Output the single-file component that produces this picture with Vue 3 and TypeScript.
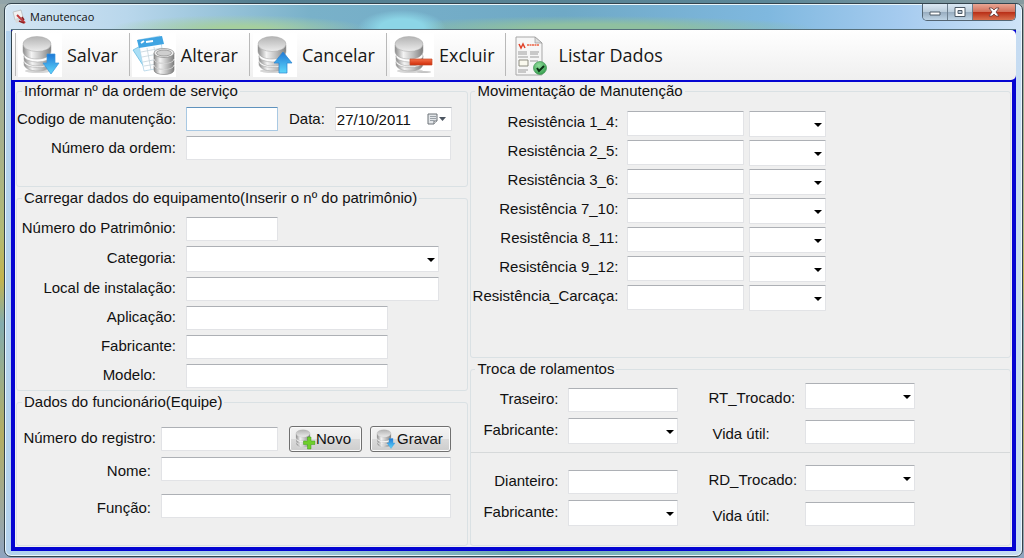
<script setup lang="ts">
import { reactive, ref } from 'vue'

interface Tool { label: string; icon: string }

const tools: Tool[] = [
  { label: 'Salvar', icon: 'salvar' },
  { label: 'Alterar', icon: 'alterar' },
  { label: 'Cancelar', icon: 'cancelar' },
  { label: 'Excluir', icon: 'excluir' },
  { label: 'Listar Dados', icon: 'listar' },
]

const resistances = reactive(
  ['1_4', '2_5', '3_6', '7_10', '8_11', '9_12'].map((n) => ({ id: `res-${n}`, label: `Resistência ${n}:`, value: '' }))
    .concat([{ id: 'res-carcaca', label: 'Resistência_Carcaça:', value: '' }]),
)

const bearings = reactive([
  { id: 'tr', name: 'Traseiro:', changed: 'RT_Trocado:', value: '', life: '' },
  { id: 'di', name: 'Dianteiro:', changed: 'RD_Trocado:', value: '', life: '' },
])

const date = ref('27/10/2011')
</script>

<template>
  <svg class="defs" aria-hidden="true">
    <defs>
      <linearGradient id="metal" x1="0" x2="1">
        <stop offset="0" stop-color="#8b8b8b" />
        <stop offset=".3" stop-color="#f4f4f4" />
        <stop offset=".65" stop-color="#bdbdbd" />
        <stop offset="1" stop-color="#7f7f7f" />
      </linearGradient>
      <linearGradient id="lid" x1="0" x2="0" y1="0" y2="1">
        <stop offset="0" stop-color="#b4b4b4" />
        <stop offset="1" stop-color="#ececec" />
      </linearGradient>
      <linearGradient id="blue" x1="0" x2="0" y1="0" y2="1">
        <stop offset="0" stop-color="#1f78d6" />
        <stop offset="1" stop-color="#5fd8fb" />
      </linearGradient>
      <linearGradient id="red" x1="0" x2="0" y1="0" y2="1">
        <stop offset="0" stop-color="#f4714a" />
        <stop offset="1" stop-color="#cf2a08" />
      </linearGradient>
      <radialGradient id="green" cx=".4" cy=".3" r=".8">
        <stop offset="0" stop-color="#8fdc9a" />
        <stop offset="1" stop-color="#2f9a48" />
      </radialGradient>
      <symbol id="stack" viewBox="0 0 44 44">
        <ellipse cx="20" cy="38" rx="13" ry="2" fill="#d6d6d6" />
        <g stroke="#9a9a9a" stroke-width=".5">
          <path d="M6 29v2c0 4 6 7 14 7s13-3 13-7v-2z" fill="url(#metal)" />
          <ellipse cx="19.500" cy="29" rx="13.500" ry="5.500" fill="#fdfdfd" />
          <path d="M6 23v3c0 4 6 7 14 7s13-3 13-7v-3z" fill="url(#metal)" />
          <ellipse cx="19.500" cy="23" rx="13.500" ry="6" fill="#fdfdfd" />
          <path d="M5 12v6c0 5 6 8 14 8s14-3 14-8v-6z" fill="url(#metal)" />
          <ellipse cx="19" cy="11" rx="14" ry="7.500" fill="url(#lid)" stroke="#a6a6a6" />
        </g>
      </symbol>
      <symbol id="salvar" viewBox="0 0 44 44">
        <use href="#stack" />
        <path d="M29 21h8v9h4l-8 11-8-11h4z" fill="url(#blue)" stroke="#3797dd" stroke-width=".7" />
      </symbol>
      <symbol id="cancelar" viewBox="0 0 44 44">
        <use href="#stack" />
        <path d="M26 40V30h-5l9-11 9 11h-5v10z" fill="url(#blue)" stroke="#2b83cf" stroke-width=".7" />
      </symbol>
      <symbol id="excluir" viewBox="0 0 44 44">
        <use href="#stack" />
        <ellipse cx="34" cy="39" rx="7" ry="1" fill="#c4c4c4" />
        <path d="M20 26h22v6H20z" fill="url(#red)" stroke="#c64a28" stroke-width=".7" />
      </symbol>
      <symbol id="novo" viewBox="0 0 44 44">
        <use href="#stack" />
        <path d="M28 18h7v8h8v7h-8v9h-7v-9h-8v-7h8z" fill="#6fce2c" stroke="#3f9c16" />
      </symbol>
      <symbol id="alterar" viewBox="0 0 44 44">
        <path d="M1 17l13-7 8 24-8 3z" fill="#a9dff6" stroke="#5bb5de" stroke-width=".7" />
        <path d="M6 7l22-4 5 31-21 4z" fill="#fdfeff" stroke="#a8cfe4" stroke-width=".7" />
        <path d="M5 7l25-4 2 8-25 4z" fill="#3fa4e2" />
        <path d="M9 10l3-2M14 9l7-1" stroke="#fff" stroke-width="2" />
        <path d="M9 19l21-4M10 24l21-4M11 29l20-4M12 33l19-3M15 15l4 22M22 14l4 22" stroke="#c5d4dc" stroke-width=".8" fill="none" />
        <g stroke="#777" stroke-width=".6">
          <path d="M22 33v4c0 6 20 6 20 0v-4z" fill="url(#metal)" />
          <path d="M22 27v5c0 6 20 6 20 0v-5z" fill="url(#metal)" />
          <path d="M22 20v6c0 6 20 6 20 0v-6z" fill="url(#metal)" />
          <path d="M22 32c0 6 20 6 20 0M22 26c0 6 20 6 20 0" fill="none" stroke="#fff" />
          <ellipse cx="32" cy="20" rx="10" ry="4.500" fill="#eee" />
          <ellipse cx="32" cy="20" rx="7.500" ry="3" fill="#cfcfcf" />
        </g>
      </symbol>
      <symbol id="listar" viewBox="0 0 44 44">
        <path d="M7 4h19l7 6v32H7z" fill="#f6f6f6" stroke="#a7a7a7" />
        <path d="M26 4v6h7z" fill="#dedede" stroke="#999" stroke-width=".7" />
        <path d="M10 11l2 4 2-4 2 4" fill="none" stroke="#e0432a" stroke-width="1.500" />
        <path d="M18 12h12" stroke="#ee8770" stroke-width="2" stroke-dasharray="2 .5" />
        <path d="M9 19h9M9 21h9M9 24h10M21 19h9M21 21h8M21 24h9M9 37h10M9 39h8M21 28h8" stroke="#9c9c9c" stroke-width="1" />
        <path d="M10 27h9v6h-9z" fill="#faf9ee" stroke="#8d8d82" />
        <circle cx="31" cy="35" r="6.500" fill="url(#green)" stroke="#2c8440" stroke-width=".6" />
        <path d="M28 35l2 3 5-5" fill="none" stroke="#0c3016" stroke-width="2" />
      </symbol>
    </defs>
  </svg>

  <main class="desktop">
    <div class="window">
      <header class="titlebar">
        <svg class="app-icon" viewBox="0 0 16 16" aria-hidden="true">
          <path d="M2 3l8-2 2 7-8 3z" fill="#f1f1f1" stroke="#b5b5b5" stroke-width=".7" />
          <path d="M4 10l3-1 2 4-4 1z" fill="#d9d9d9" />
          <path d="M6 6l8 8" stroke="#c0393c" stroke-width="2" />
          <path d="M8 12l5 2M11 8l2 3" stroke="#8d2020" stroke-width="1.500" />
        </svg>
        <h1>Manutencao</h1>
        <div class="controls">
          <button type="button" class="ctl min" aria-label="Minimizar">
            <svg viewBox="0 0 12 10"><path d="M1 5h10v3H1z" fill="#fff" stroke="#4d5a66" /></svg>
          </button>
          <button type="button" class="ctl max" aria-label="Maximizar">
            <svg viewBox="0 0 12 10"><path d="M1 .5h10v9H1z" fill="#fff" stroke="#4d5a66" /><path d="M4 3.500h4v3H4z" fill="#b4c3d2" stroke="#4d5a66" /></svg>
          </button>
          <button type="button" class="ctl close" aria-label="Fechar">
            <svg viewBox="0 0 12 10"><path d="M1 1h3l2 2 2-2h3L8 5l3 4H8L6 7 4 9H1l3-4z" fill="#fff" stroke="#5e3838" stroke-width=".8" /></svg>
          </button>
        </div>
      </header>

      <div class="client">
        <nav class="toolbar">
          <button v-for="t in tools" :key="t.icon" type="button" class="tool">
            <svg class="tool-icon" viewBox="0 0 44 44" aria-hidden="true"><use :href="`#${t.icon}`" /></svg>
            <span>{{ t.label }}</span>
          </button>
        </nav>

        <form class="body" @submit.prevent>
          <div class="column">
            <fieldset class="order">
              <legend>Informar nº da ordem de serviço</legend>
              <div class="row">
                <label for="codigo">Codigo de manutenção:</label>
                <input id="codigo" type="text" class="short focused" />
                <label for="data" class="date-label">Data:</label>
                <span class="date">
                  <input id="data" v-model="date" type="text" />
                  <button type="button" aria-label="Abrir calendário">
                    <svg viewBox="0 0 20 12"><path d="M1 1h9v7l-3 3H1z" fill="#e3e6e9" stroke="#6d7378" /><path d="M3 3.500h6M3 5.500h6M3 7.500h4" stroke="#9aa1a8" /><path d="M10 8H7v3" fill="#fff" stroke="#6d7378" /><path d="M12 4h7l-3.500 4z" fill="#4c5560" /></svg>
                  </button>
                </span>
              </div>
              <div class="row">
                <label for="ordem">Número da ordem:</label>
                <input id="ordem" type="text" class="full" />
              </div>
            </fieldset>

            <fieldset class="equipment">
              <legend>Carregar dados do equipamento(Inserir o nº do patrimônio)</legend>
              <div class="row">
                <label for="patrimonio">Número do Patrimônio:</label>
                <input id="patrimonio" type="text" class="short" />
              </div>
              <div class="row">
                <label for="categoria">Categoria:</label>
                <span class="combo wide"><select id="categoria"></select></span>
              </div>
              <div class="row">
                <label for="local">Local de instalação:</label>
                <input id="local" type="text" class="wide" />
              </div>
              <div class="row">
                <label for="aplicacao">Aplicação:</label>
                <input id="aplicacao" type="text" class="medium" />
              </div>
              <div class="row">
                <label for="fabricante">Fabricante:</label>
                <input id="fabricante" type="text" class="medium" />
              </div>
              <div class="row">
                <label for="modelo" class="inset">Modelo:</label>
                <input id="modelo" type="text" class="medium" />
              </div>
            </fieldset>

            <fieldset class="staff">
              <legend>Dados do funcionário(Equipe)</legend>
              <div class="row actions">
                <label for="registro">Número do registro:</label>
                <input id="registro" type="text" class="entry" />
                <button type="button" class="push novo"><svg viewBox="0 0 44 44" aria-hidden="true"><use href="#novo" /></svg>Novo</button>
                <button type="button" class="push gravar"><svg viewBox="0 0 44 44" aria-hidden="true"><use href="#salvar" /></svg>Gravar</button>
              </div>
              <div class="row person">
                <label for="nome">Nome:</label>
                <input id="nome" type="text" class="long" />
              </div>
              <div class="row person">
                <label for="funcao">Função:</label>
                <input id="funcao" type="text" class="long" />
              </div>
            </fieldset>
          </div>

          <div class="column side">
            <fieldset class="movement">
              <legend>Movimentação de Manutenção</legend>
              <div v-for="r in resistances" :key="r.id" class="row">
                <label :for="r.id">{{ r.label }}</label>
                <input :id="r.id" v-model="r.value" type="text" class="entry" />
                <span class="combo unit"><select :aria-label="`Unidade ${r.label}`"></select></span>
              </div>
            </fieldset>

            <fieldset class="bearings">
              <legend>Troca de rolamentos</legend>
              <div v-for="b in bearings" :key="b.id" class="bearing">
                <div class="part">
                  <div class="row">
                    <label :for="`${b.id}-nome`">{{ b.name }}</label>
                    <input :id="`${b.id}-nome`" v-model="b.value" type="text" class="slot" />
                  </div>
                  <div class="row">
                    <label :for="`${b.id}-fab`">Fabricante:</label>
                    <span class="combo slot"><select :id="`${b.id}-fab`"></select></span>
                  </div>
                </div>
                <div class="state">
                  <div class="row">
                    <label :for="`${b.id}-troca`">{{ b.changed }}</label>
                    <span class="combo slot"><select :id="`${b.id}-troca`"></select></span>
                  </div>
                  <div class="row">
                    <label :for="`${b.id}-vida`" class="life">Vida útil:</label>
                    <input :id="`${b.id}-vida`" v-model="b.life" type="text" class="slot" />
                  </div>
                </div>
              </div>
            </fieldset>
          </div>
        </form>
      </div>
    </div>
  </main>
</template>

<style>
body {
  margin: 0;
}
</style>

<style scoped>
* {
  box-sizing: border-box;
}
.defs {
  position: absolute;
  width: 0;
  height: 0;
}
.desktop {
  display: flex;
  min-height: 100vh;
  padding: 3px 1px 1px 4px;
  background:
    linear-gradient(90deg, #93a5aa, #547f91 25%, #5b8798 75%, #879ba0) top / 100% 4px no-repeat,
    linear-gradient(180deg, #9aa9ab 0, #a6b08c 25%, #b2ba74 42%, #c3b44e 50%, #83acae 58%, #b3ae62 78%, #8fa4c0 100%);
  font-family: "Liberation Sans", Arial, sans-serif;
  font-size: 15px;
  line-height: 18px;
  color: #111;
}
.window {
  flex: 1;
  display: flex;
  flex-direction: column;
  min-width: 0;
  padding: 0 6px 5px;
  border: 1px solid #33434d;
  border-radius: 7px;
  box-shadow: inset 0 0 0 1px #eaf6fb;
  background:
    radial-gradient(ellipse 44px 18px at 39% 24px, #8cd5e6 50%, transparent) no-repeat,
    radial-gradient(ellipse 130px 14px at 23% 25px, #a5cf9e 20%, transparent) no-repeat,
    radial-gradient(ellipse 220px 12px at 58% 24px, #8fc0a0 30%, transparent) no-repeat,
    linear-gradient(90deg, #d3e5f3 0, #b9d7ec 12%, #79b1c9 30%, #6fa9c6 55%, #7fb8df 75%, #a5cbef 88%, #cfe4f8 100%) top / 100% 27px no-repeat,
    linear-gradient(90deg, #b4d3ee 0, #a5cde2 28%, #72aab2 50%, #8bc0c8 72%, #bdd5f0 84%, #c6dcf2 100%);
}
.titlebar {
  display: flex;
  align-items: center;
  height: 25px;
}
.app-icon {
  width: 16px;
  height: 16px;
}
h1 {
  flex: 1;
  margin: 0 0 0 3px;
  font: 11px/18px "Open Sans", "Noto Sans", sans-serif;
}
.controls {
  display: flex;
  align-self: flex-start;
  border: 1px solid #536573;
  border-top: 0;
  border-radius: 0 0 5px 5px;
  overflow: hidden;
}
.ctl {
  display: grid;
  place-items: center;
  width: 25px;
  height: 16px;
  padding: 0;
  border: 0;
  border-right: 1px solid #6d7f8e;
  background: linear-gradient(#dce9f4, #bccddb 48%, #98adc0 52%, #bfd4e5);
}
.ctl svg {
  width: 12px;
  height: 10px;
}
.ctl.close {
  width: 42px;
  border-right: 0;
  background: linear-gradient(#e9a694, #d3705a 48%, #b92f17 52%, #d9704e);
}
.client {
  flex: 1;
  display: flex;
  flex-direction: column;
  border-top: 1px solid #56707c;
  background: #0505d2;
}
.toolbar {
  display: flex;
  height: 50px;
  padding: 3px 0 4px 3px;
  border-left: 1px solid #33434d;
  border-radius: 2px 5px 5px 0;
  background: linear-gradient(#fff, #f7f7f7 50%, #efefef);
}
.tool {
  display: flex;
  align-items: center;
  gap: 5px;
  padding: 0 11px 0 2px;
  border: 0;
  border-left: 1px solid #b9b9b9;
  background: none;
  font: 18px/26px "Open Sans", "Noto Sans", sans-serif;
  color: #161616;
  white-space: nowrap;
}
.tool:nth-child(n + 3) {
  padding-left: 3px;
}
.tool-icon {
  width: 44px;
  height: 44px;
  background: #fff;
}
.tool:last-child .tool-icon {
  background: none;
}
.body {
  flex: 1;
  display: grid;
  grid-template-columns: 452fr 540fr;
  gap: 2px;
  padding: 0 1px 1px;
  border: 4px solid #0505d2;
  border-top-width: 2px;
  background: #efefef;
}
.column {
  display: flex;
  flex-direction: column;
  gap: 2px;
  min-width: 0;
}
fieldset {
  min-width: 0;
  margin: 0;
  padding: 0;
  border: 1px solid #dae1e4;
  border-radius: 3px;
}
legend {
  margin-left: 5px;
  padding: 0 2px;
}
.side legend {
  margin-left: 4px;
}
.row {
  display: flex;
  align-items: center;
}
label {
  flex: none;
  width: 159px;
  margin-right: 10px;
  padding-bottom: 3px;
  text-align: right;
  white-space: nowrap;
}
input,
select {
  height: 24px;
  padding: 0 3px;
  border: 1px solid #e2e3e6;
  border-top-color: #adb0b5;
  border-radius: 1px;
  outline: 0;
  background: #fff;
  font: inherit;
  color: #111;
}
.focused {
  border-color: #a9c9e3;
  border-top-color: #5f92bd;
}
.combo {
  position: relative;
  display: flex;
}
.combo::after {
  content: "";
  position: absolute;
  right: 4px;
  top: 12px;
  border: 4px solid transparent;
  border-top-color: #000;
  border-bottom: 0;
  pointer-events: none;
}
select {
  width: 100%;
  height: 26px;
  appearance: none;
}
.short { width: 92px; }
.full { width: 265px; }
.wide { width: 253px; }
.medium { width: 202px; }
.entry { width: 117px; }
.long { width: 290px; }
.unit { width: 77px; }
.slot { width: 110px; }

.order,
.equipment,
.staff {
  display: flex;
  flex-direction: column;
  gap: 5px;
}
.order { padding: 7px 0 26px; }
.order label { padding-bottom: 0; }
.equipment { padding: 10px 0 2px; }
.inset { padding-right: 20px; }
.date-label {
  width: auto;
  margin-left: 11px;
}
.date {
  display: flex;
  width: 117px;
  height: 24px;
  margin-left: auto;
  margin-right: 16px;
  border: 1px solid #e2e3e6;
  border-top-color: #adb0b5;
  background: #fff;
}
.date input {
  flex: 1;
  min-width: 0;
  height: 22px;
  padding: 0 1px;
  border: 0;
}
.date button {
  width: 24px;
  padding: 0;
  border: 0;
  background: none;
}
.date svg {
  display: block;
  width: 20px;
  height: 12px;
}
.staff {
  flex: 1;
  padding-top: 15px;
}
.staff label {
  width: 139px;
  margin-right: 5px;
}
.staff .person label {
  padding: 4px 5px 0 0;
}
.person + .person { margin-top: 8px; }
.push {
  display: flex;
  align-items: center;
  width: 73px;
  height: 26px;
  margin-left: 11px;
  padding: 0 3px;
  border: 1px solid #707070;
  border-radius: 3px;
  box-shadow: inset 0 0 0 1px #fafafa;
  background: linear-gradient(#f3f3f3, #ebebeb 48%, #dadada 52%, #cdcdcd);
  font: inherit;
  color: #111;
}
.push svg {
  flex: none;
  width: 23px;
  height: 22px;
}
.gravar {
  width: 81px;
  margin-left: 8px;
}
.movement {
  display: flex;
  flex-direction: column;
  gap: 3px;
  padding: 11px 0 46px;
}
.movement .row { align-items: flex-start; }
.movement label {
  width: 147px;
  margin: 2px 9px 0 0;
}
.movement .entry {
  height: 25px;
  margin-right: 5px;
}
.bearings { flex: 1; }
.bearing {
  display: flex;
  align-items: flex-end;
  gap: 30px;
  padding: 5px 0 8px;
}
.bearing + .bearing {
  padding-top: 12px;
  border-top: 1px solid #d6d9da;
}
.part,
.state {
  display: flex;
  flex-direction: column;
  gap: 6px;
}
.state { gap: 11px; }
.part label { width: 87px; }
.state label {
  width: 97px;
  margin-right: 0;
  padding: 3px 0 0;
  text-align: left;
}
.state .life { padding-left: 4px; }
</style>
